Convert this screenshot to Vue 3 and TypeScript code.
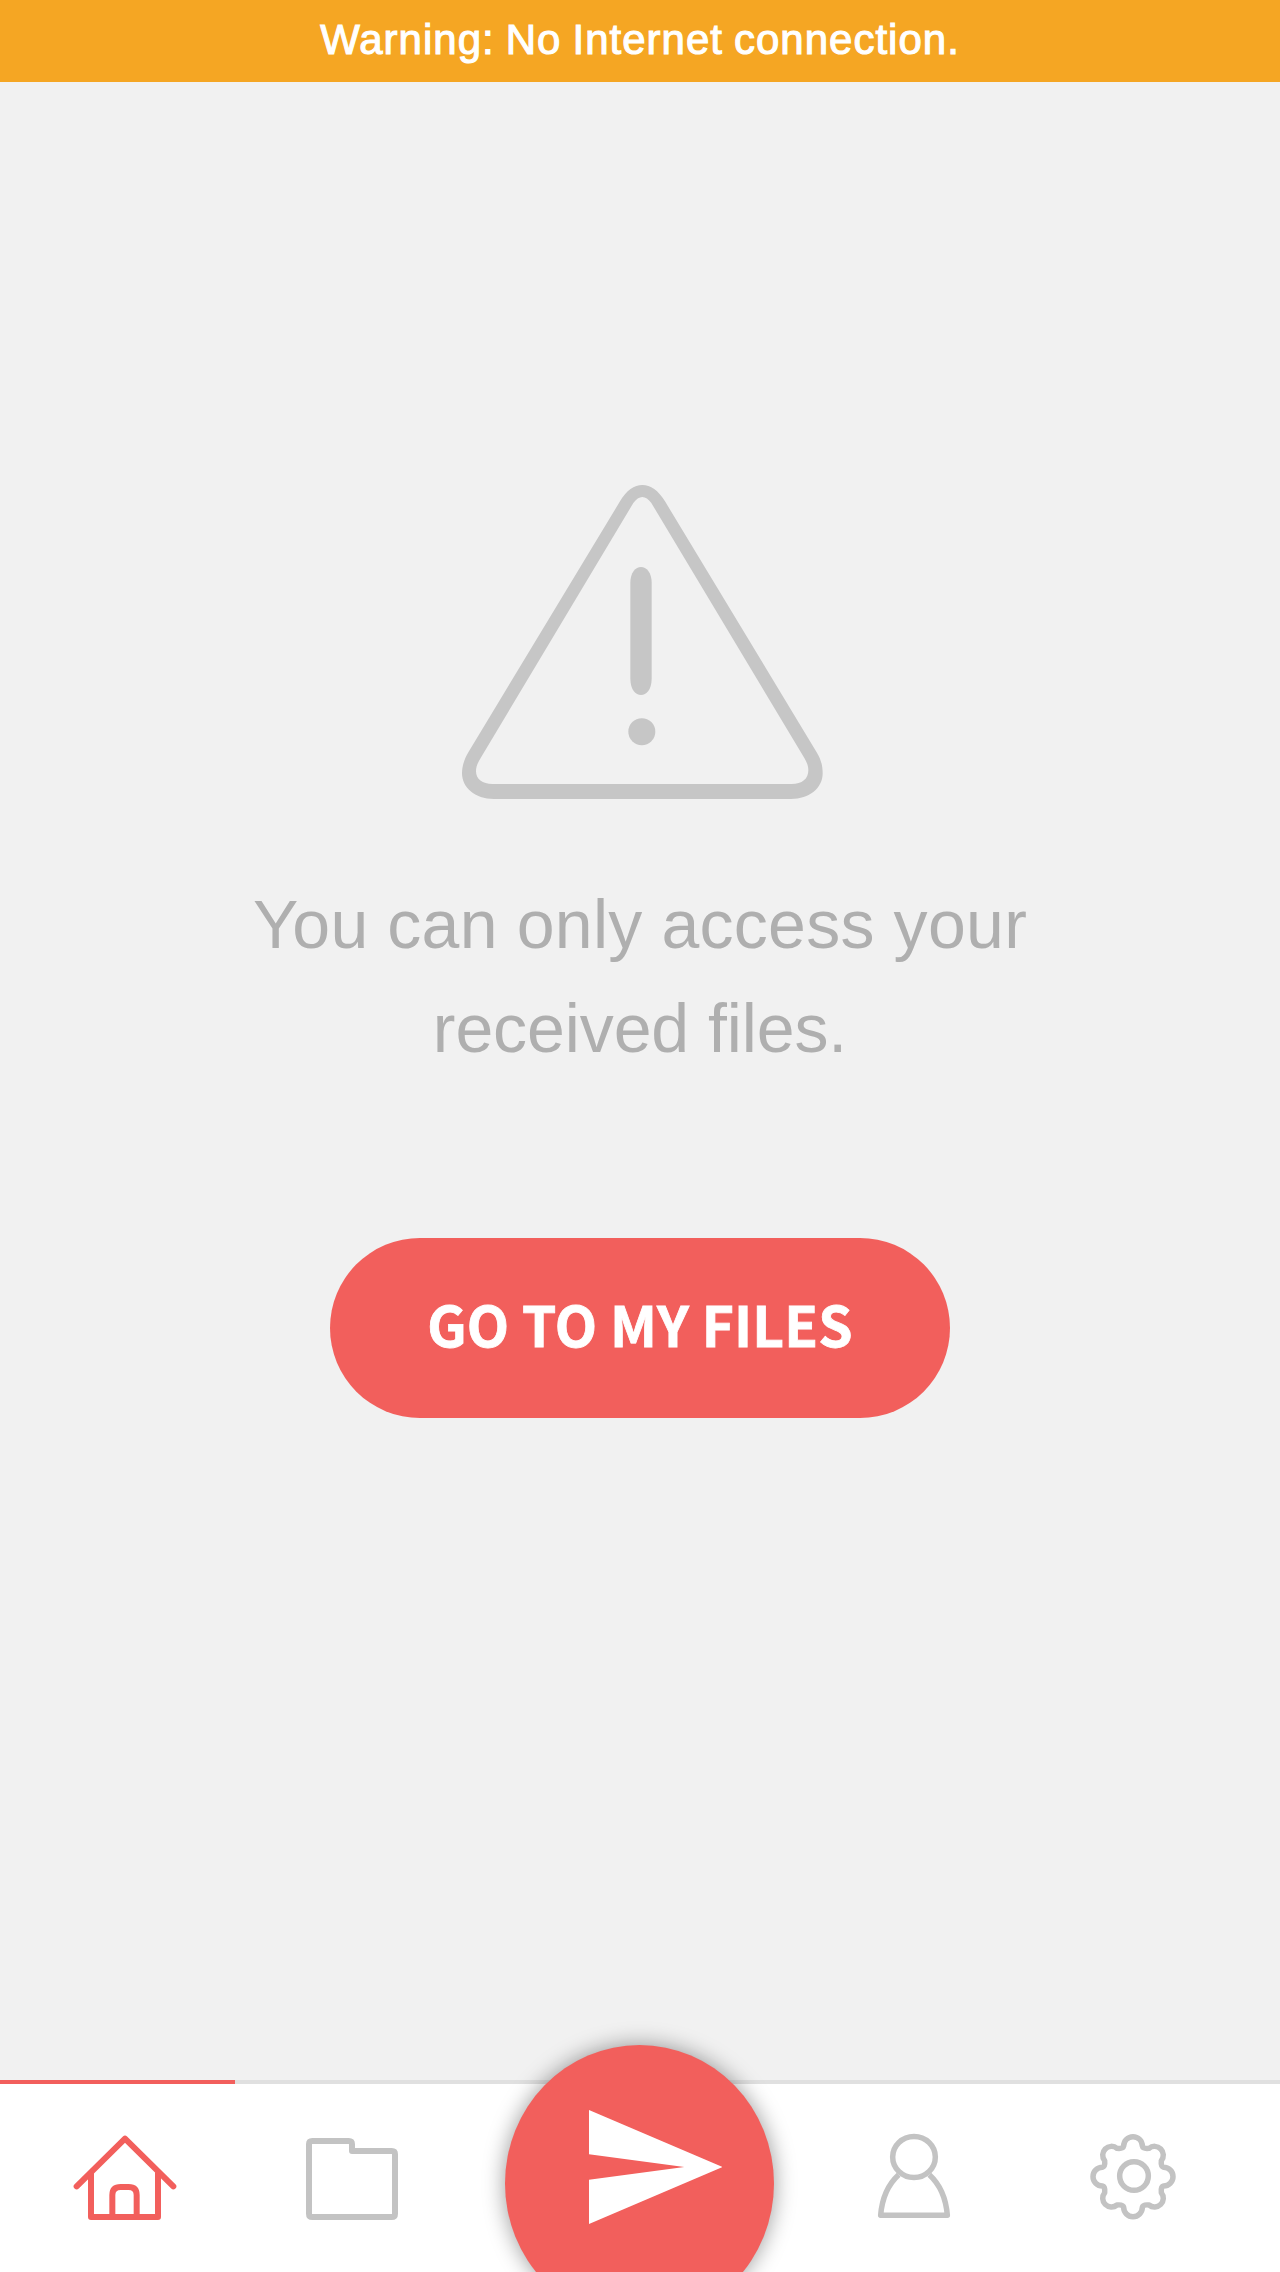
<script setup lang="ts">
const bannerText: string = 'Warning: No Internet connection.'
const messageLines: string[] = ['You can only access your', 'received files.']
</script>

<template>
  <div class="screen">
    <header class="banner"><span>{{ bannerText }}</span></header>

    <main class="content">
      <svg class="warning" viewBox="60 39 1092 954" aria-hidden="true">
        <path
          fill-rule="evenodd"
          d="M540 94C578 29 636 29 675 94L1129 845C1144 869 1148 889 1148 910C1148 955 1108 987 1053 987H162C104 987 66 952 66 910C66 889 73 866 86 845ZM580 99L122 864C112 880 108 891 108 904C108 927 127 942 158 942H1055C1086 942 1105 927 1105 901C1105 890 1102 879 1093 864L634 99C617 75 597 75 580 99Z"
        />
        <path d="M571 339C571 275 635 275 635 339V626C635 691 571 691 571 626Z" />
        <circle cx="605.5" cy="785" r="40.5" />
      </svg>
      <p class="message">
        <span v-for="(line, i) in messageLines" :key="i" :class="'line-' + i">{{ line }}</span>
      </p>
      <button class="cta" type="button"><span>GO TO MY FILES</span></button>
    </main>

    <nav class="tabs">
      <a class="tab home">
        <svg viewBox="0 0 540 540">
          <path d="M50 379L195 236L340 379M93 338V471H294V338M157 468V405Q157 381 182 381H206Q230 381 230 405V468" />
        </svg>
      </a>
      <a class="tab folder">
        <svg viewBox="0 0 420 390">
          <path d="M87 103Q87 93 97 93H206Q216 93 216 103V123H335Q345 123 345 133V311Q345 321 335 321H97Q87 321 87 311Z" />
        </svg>
      </a>
      <a class="send">
        <svg viewBox="0 0 400 342">
          <path d="M0 0L400 171L0 342V209L286 171L0 133Z" />
        </svg>
      </a>
      <a class="tab person">
        <svg viewBox="0 0 330 390">
          <ellipse cx="162" cy="141" rx="64" ry="61.5" />
          <path d="M116 194Q68 238 62 316H262Q256 238 208 194" stroke-linecap="butt" />
        </svg>
      </a>
      <a class="tab gear">
        <svg viewBox="0 0 390 390">
          <path d="M161 108A28 28 0 0 1 217 108Q219 117 237 115A26.3 26.3 0 0 1 274 152Q272 170 281 172A28 28 0 0 1 281 228Q272 230 274 248A26.3 26.3 0 0 1 237 285Q219 283 217 292A28 28 0 0 1 161 292Q159 283 141 285A26.3 26.3 0 0 1 104 248Q106 230 97 228A28 28 0 0 1 97 172Q106 170 104 152A26.3 26.3 0 0 1 141 115Q159 117 161 108Z" />
          <circle cx="192" cy="198" r="43" />
        </svg>
      </a>
    </nav>
  </div>
</template>

<style>
body {
  margin: 0;
}
</style>

<style scoped>
.screen {
  width: 1280px;
  height: 2272px;
  display: flex;
  flex-direction: column;
  overflow: hidden;
  background: #f1f1f1;
  font-family: "Liberation Sans", Arial, sans-serif;
}
.banner {
  height: 82px;
  flex: none;
  display: flex;
  justify-content: center;
  background: #f5a623;
  color: #fff;
  font-size: 42px;
  line-height: 80px;
  letter-spacing: 1px;
  word-spacing: -1.6px;
  white-space: nowrap;
  -webkit-text-stroke: 1.1px #fff;
}
.content {
  flex: 1;
  display: flex;
  flex-direction: column;
  align-items: center;
}
.warning {
  width: 364px;
  height: 318px;
  margin: 401px 0 0 4px;
  fill: #c6c6c6;
  flex: none;
}
.message {
  margin: 71px 0 0;
  display: flex;
  flex-direction: column;
  align-items: center;
  color: #afafaf;
  font-size: 68px;
  line-height: 104px;
  white-space: nowrap;
}
.line-0 {
  letter-spacing: 0.3px;
  word-spacing: -0.4px;
}
.line-1 {
  letter-spacing: -0.1px;
}
.cta {
  width: 620px;
  height: 180px;
  margin-top: 158px;
  padding: 0 0 10px;
  border: 0;
  border-radius: 90px;
  background: #f25f5c;
  color: #fff;
  font: 700 55px/170px "Noto Sans CJK SC", sans-serif;
  letter-spacing: 0.15px;
  white-space: nowrap;
  -webkit-text-stroke: 0.8px #fff;
}
.tabs {
  height: 188px;
  flex: none;
  display: flex;
  align-items: flex-start;
  border-top: 4px solid #e0e0e0;
  background: #fff;
}
.tab {
  flex: none;
  display: flex;
}
.tab svg {
  flex: none;
  fill: none;
  stroke: #c3c3c3;
  stroke-width: 16.5;
  stroke-linejoin: round;
}
.home {
  width: 235px;
  height: 180px;
  margin-top: -4px;
  border-top: 4px solid #f25f5c;
}
.home svg {
  width: 180px;
  height: 180px;
  margin: -24px 0 0 60px;
  stroke: #f25f5c;
  stroke-width: 18;
  stroke-linecap: round;
}
.folder {
  margin: 26px 0 0 45px;
}
.folder svg {
  width: 140px;
  height: 130px;
  stroke-width: 18;
}
.send {
  width: 269px;
  height: 277px;
  flex: none;
  margin: -39.5px 0 0 85px;
  border-radius: 50%;
  background: #f25f5c;
  box-shadow: 0 0 22px rgba(0, 0, 0, 0.4);
}
.send svg {
  display: block;
  width: 133.3px;
  height: 114px;
  margin: 65.5px 0 0 84px;
  fill: #fff;
}
.person {
  margin: 26px 0 0 86px;
}
.person svg {
  width: 110px;
  height: 130px;
}
.gear {
  margin: 26px 0 0 100px;
}
.gear svg {
  width: 130px;
  height: 130px;
}
</style>
